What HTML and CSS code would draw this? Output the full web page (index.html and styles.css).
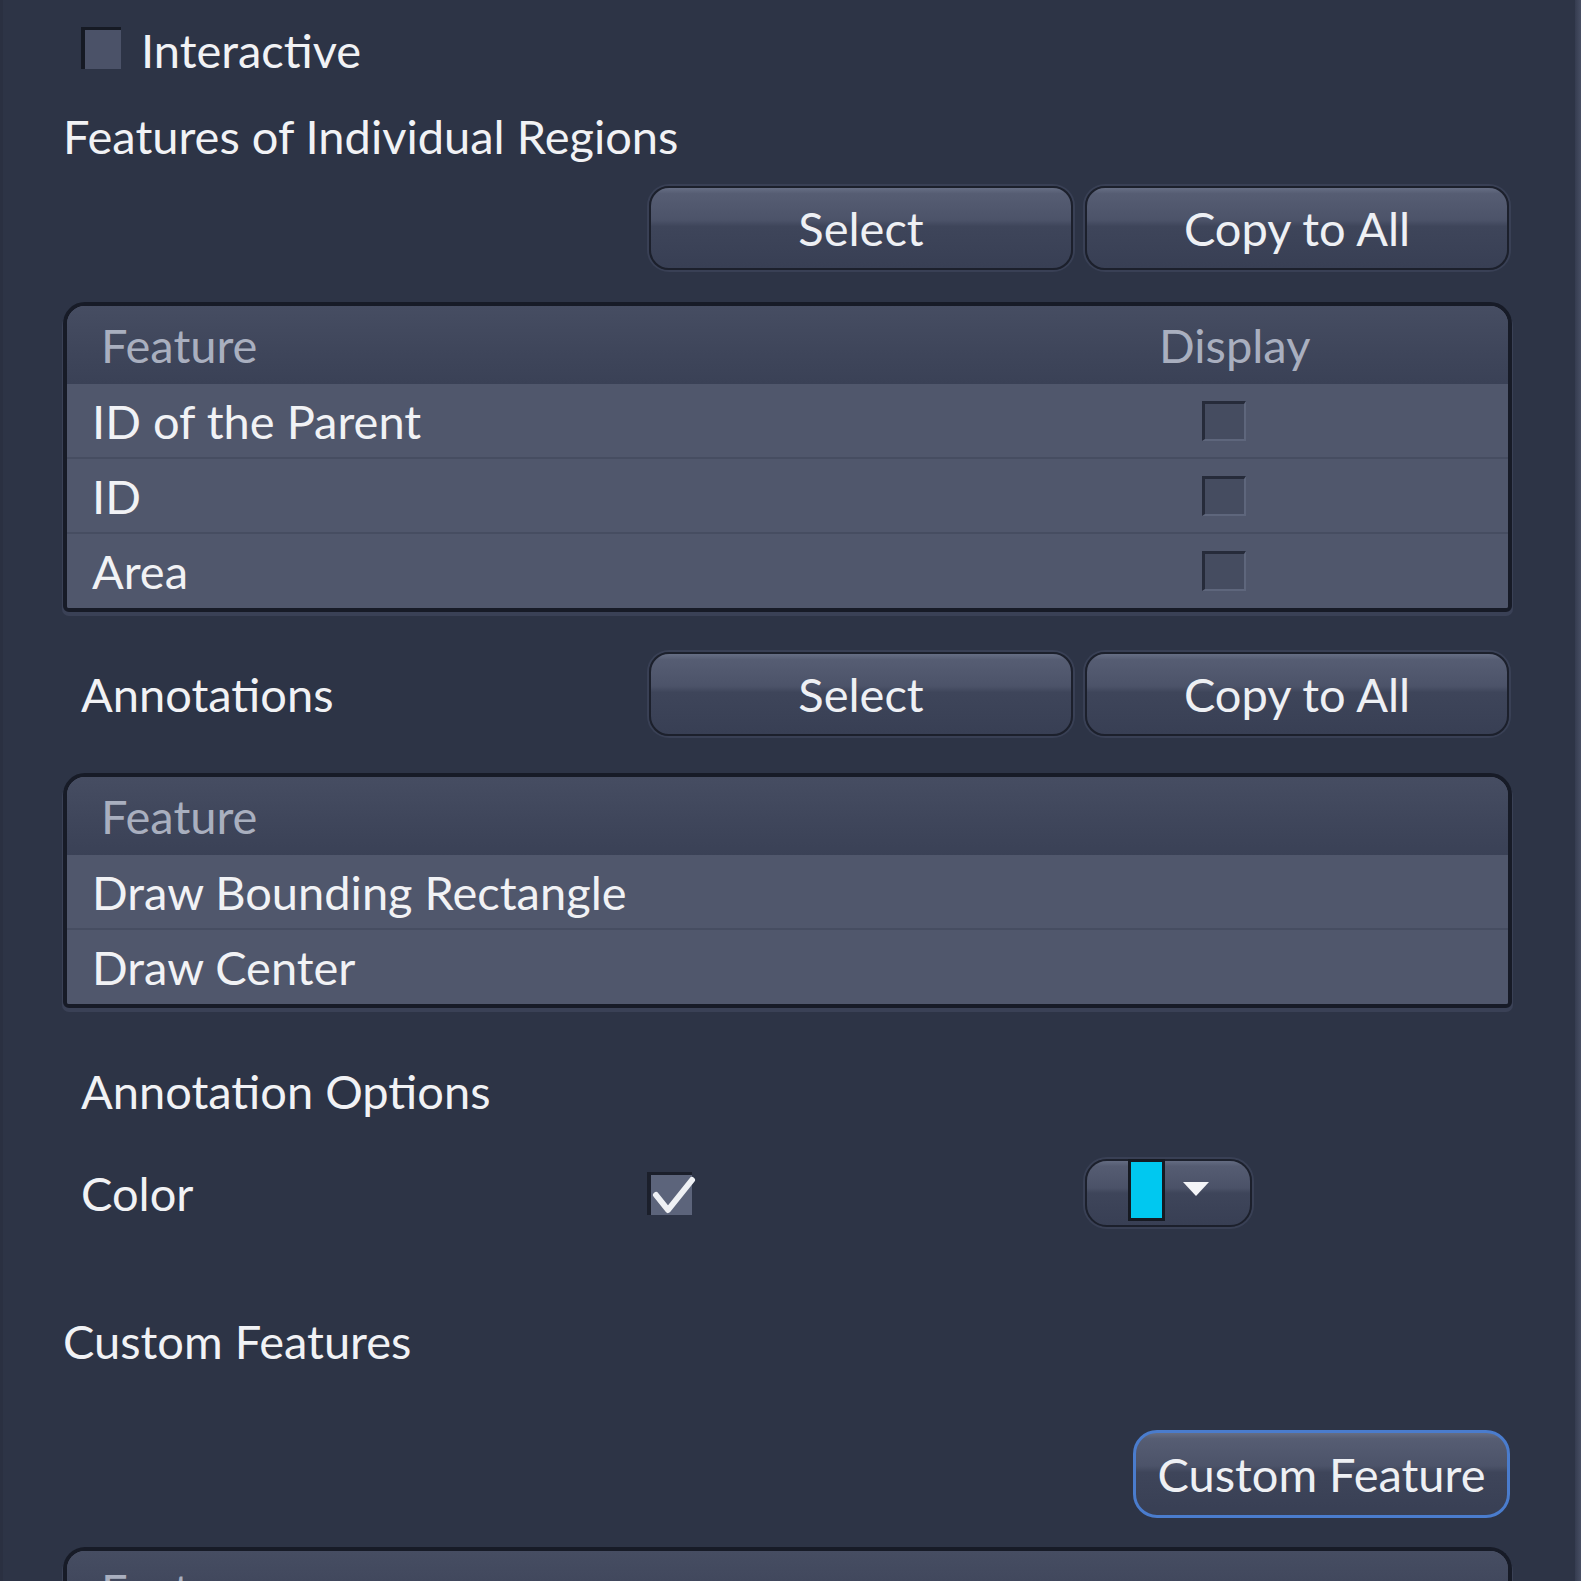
FILE: index.html
```html
<!DOCTYPE html>
<html lang="en">
<head>
<meta charset="utf-8">
<title>Features</title>
<link rel="stylesheet" href="styles.css">
</head>
<body>
<div class="frame">
  <div class="panel">
    <div class="row-interactive">
      <span class="cb cb-plain"></span>
      <span class="txt">Interactive</span>
    </div>

    <div class="section-title">Features of Individual Regions</div>

    <div class="btn-row">
      <span class="txt"></span>
      <div class="btns">
        <button class="btn">Select</button>
        <button class="btn">Copy to All</button>
      </div>
    </div>

    <div class="table t1">
      <div class="thead"><span class="c1">Feature</span><span class="c2">Display</span></div>
      <div class="tr"><span class="c1">ID of the Parent</span><span class="c2"><span class="cb cb-cell"></span></span></div>
      <div class="tr"><span class="c1">ID</span><span class="c2"><span class="cb cb-cell"></span></span></div>
      <div class="tr tr-last"><span class="c1">Area</span><span class="c2"><span class="cb cb-cell"></span></span></div>
    </div>

    <div class="btn-row annot-row">
      <span class="txt">Annotations</span>
      <div class="btns">
        <button class="btn">Select</button>
        <button class="btn">Copy to All</button>
      </div>
    </div>

    <div class="table t2">
      <div class="thead"><span class="c1">Feature</span></div>
      <div class="tr"><span class="c1">Draw Bounding Rectangle</span></div>
      <div class="tr tr-last"><span class="c1">Draw Center</span></div>
    </div>

    <div class="sub-title">Annotation Options</div>

    <div class="color-row">
      <span class="txt color-label">Color</span>
      <span class="cb cb-checked">
        <svg class="check" width="56" height="50" viewBox="0 0 56 50" aria-hidden="true">
          <polyline points="9,23 21,38 45,8" fill="none" stroke="#eef0f4" stroke-width="6" stroke-linecap="round" stroke-linejoin="round"/>
        </svg>
      </span>
      <button class="color-btn">
        <span class="swatch"></span>
        <span class="arrow"></span>
      </button>
    </div>

    <div class="section-title custom-title">Custom Features</div>

    <div class="custom-row">
      <button class="btn btn-focus">Custom Feature</button>
    </div>

    <div class="table t3">
      <div class="thead"><span class="c1">Feature</span></div>
    </div>
  </div>
  <div class="edge"></div>
</div>
</body>
</html>
```

FILE: styles.css
```css
* {
  box-sizing: border-box;
}

html,
body {
  margin: 0;
  padding: 0;
}

body {
  width: 1581px;
  height: 1581px;
  overflow: hidden;
  background: #2d3446;
  font-family: "Lato", "Open Sans", "Noto Sans", sans-serif;
  font-size: 47px;
  line-height: 48px;
  color: #f1f2f5;
}

.frame {
  display: flex;
  width: 1581px;
  height: 1581px;
}

.panel {
  width: 1575px;
  height: 1581px;
  padding: 0 63px 0 60px;
  border-left: 3px solid #2a3041;
  overflow: hidden;
}

.edge {
  width: 6px;
  background: linear-gradient(90deg, #353c50, #474e63);
}

.txt {
  white-space: nowrap;
}

/* Interactive */
.row-interactive {
  height: 97px;
  display: flex;
  align-items: flex-start;
  padding-left: 18px;
}

.row-interactive .cb {
  margin-top: 27px;
}

.row-interactive .txt {
  margin-top: 26px;
  margin-left: 20px;
}

.cb {
  display: inline-block;
  flex: none;
}

.cb-plain {
  width: 40px;
  height: 42px;
  background: #4b5268;
  border-top: 3px solid #161a24;
  border-left: 4px solid #161a24;
}

.cb-cell {
  width: 44px;
  height: 40px;
  background: #454c60;
  border-top: 3px solid #262b3a;
  border-left: 3px solid #262b3a;
  border-right: 2px solid #5e667c;
  border-bottom: 2px solid #5e667c;
}

.cb-checked {
  position: relative;
  width: 45px;
  height: 43px;
  background: #5c647b;
  border-top: 3px solid #1b1f2b;
  border-left: 4px solid #1b1f2b;
}

.check {
  position: absolute;
  left: -4px;
  top: -3px;
  overflow: visible;
}

/* Titles */
.section-title {
  height: 78px;
  display: flex;
  align-items: center;
  white-space: nowrap;
}

.sub-title {
  height: 78px;
  margin-top: 44px;
  padding-left: 18px;
  display: flex;
  align-items: center;
}

.custom-title {
  margin-top: 71px;
}

/* Buttons */
.btn-row {
  margin-top: 11px;
  height: 84px;
  display: flex;
  align-items: center;
  justify-content: space-between;
  padding-left: 18px;
  padding-right: 3px;
}

.annot-row {
  margin-top: 40px;
}

.btns {
  display: flex;
  gap: 12px;
}

.btn {
  width: 424px;
  height: 84px;
  padding: 0;
  margin: 0;
  font: inherit;
  color: #eef0f4;
  border: 2px solid #1c202c;
  border-radius: 20px;
  background: linear-gradient(180deg, #666e84 0%, #565d73 7%, #4c5369 40%, #3e455a 48%, #383f54 100%);
  box-shadow: 0 0 0 2px #394055;
  display: flex;
  align-items: center;
  justify-content: center;
}

.custom-row {
  margin-top: 50px;
  height: 88px;
  display: flex;
  justify-content: flex-end;
  padding-right: 2px;
}

.btn-focus {
  width: 377px;
  height: 88px;
  border: 3px solid #4a7ccd;
  border-radius: 24px;
  box-shadow: none;
}

/* Tables */
.table {
  border: 4px solid #171b27;
  border-radius: 22px 22px 6px 6px;
  overflow: hidden;
  box-shadow: 0 3px 0 1px #3a4156;
  background: #50576c;
}

.t1 {
  margin-top: 32px;
}

.t2 {
  margin-top: 37px;
}

.t3 {
  margin-top: 29px;
  border-bottom: none;
}

.thead {
  height: 78px;
  display: flex;
  align-items: center;
  background: linear-gradient(180deg, #464d62 0%, #3f465b 55%, #3a4156 100%);
  color: #a9afbf;
}

.thead .c1 {
  padding-left: 34px;
}

.tr {
  height: 75px;
  display: flex;
  align-items: center;
  background: #50576c;
  border-top: 2px solid #464d61;
}

.thead + .tr {
  height: 73px;
  border-top: none;
}

.tr-last {
  height: 76px;
}

.tr .c1 {
  padding-left: 25px;
}

.c1 {
  flex: 1;
  white-space: nowrap;
}

.c2 {
  width: 349px;
  flex: none;
  display: flex;
  align-items: center;
}

.tr .c2 .cb {
  margin-left: 43px;
}

/* Color row */
.color-row {
  margin-top: 25px;
  height: 76px;
  display: flex;
  align-items: center;
  padding-left: 18px;
}

.color-label {
  width: 566px;
  flex: none;
}

.color-btn {
  margin-left: 393px;
  width: 167px;
  height: 68px;
  padding: 0 0 0 41px;
  border: 2px solid #1c202c;
  border-radius: 22px;
  background: linear-gradient(180deg, #646c82 0%, #555c72 8%, #4b5268 42%, #3e455a 50%, #383f54 100%);
  box-shadow: 0 0 0 2px #394055;
  display: flex;
  align-items: flex-start;
}

.swatch {
  width: 37px;
  height: 62px;
  margin-top: -2px;
  background: #00c8f0;
  border: 3px solid #161a22;
}

.arrow {
  width: 0;
  height: 0;
  margin-left: 18px;
  margin-top: 21px;
  border-left: 13px solid transparent;
  border-right: 13px solid transparent;
  border-top: 14px solid #f4f5f8;
}
```
